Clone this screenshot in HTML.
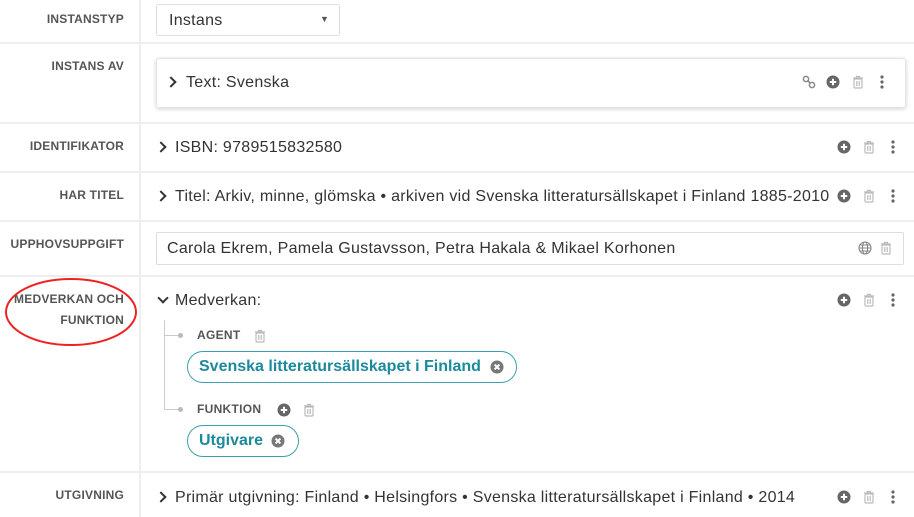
<!DOCTYPE html>
<html><head><meta charset="utf-8"><style>
body{margin:0;width:914px;height:517px;background:#fff;position:relative;overflow:hidden;font-family:"Liberation Sans",sans-serif;color:#333}
.a{position:absolute}
.hl{position:absolute;left:0;width:914px;height:2px;background:#eee}
.vl{position:absolute;left:139px;top:0;width:2px;height:517px;background:#eee}
.lab{position:absolute;right:790px;font-size:12px;font-weight:bold;color:#555;text-align:right;white-space:nowrap;line-height:21px;letter-spacing:0.2px}
.val{position:absolute;font-size:16px;color:#333;white-space:nowrap;letter-spacing:0.28px}
.chev{position:absolute;width:6px;height:6px;border-right:2px solid #333;border-bottom:2px solid #333;transform:rotate(-45deg)}
.pill{position:absolute;border:1.5px solid #3aa0b2;border-radius:17px;color:#1c8a9c;font-weight:bold;font-size:16px;box-sizing:border-box;white-space:nowrap}
</style></head><body>
<svg width="0" height="0" style="position:absolute">
<defs>
<symbol id="plus" viewBox="0 0 14 14"><circle cx="7" cy="7" r="6.5" fill="#666"/><path d="M7 3.8v6.4M3.8 7h6.4" stroke="#fff" stroke-width="2"/></symbol>
<symbol id="trash" viewBox="0 0 12 14"><path d="M1 3h10M4.5 3V1.5h3V3" stroke="#bbb" stroke-width="1.2" fill="none"/><rect x="2" y="4" width="8" height="9" rx="1" fill="none" stroke="#bbb" stroke-width="1.2"/><path d="M4.5 6v5M6 6v5M7.5 6v5" stroke="#bbb" stroke-width="0.8"/></symbol>
<symbol id="keb" viewBox="0 0 4 14"><circle cx="2" cy="2" r="1.6" fill="#666"/><circle cx="2" cy="7" r="1.6" fill="#666"/><circle cx="2" cy="12" r="1.6" fill="#666"/></symbol>
<symbol id="x" viewBox="0 0 14 14"><circle cx="7" cy="7" r="6.5" fill="#777"/><path d="M4.6 4.6l4.8 4.8M9.4 4.6l-4.8 4.8" stroke="#fff" stroke-width="2"/></symbol>
</defs></svg>
<div class="vl"></div>
<div class="hl" style="top:42px"></div>
<div class="hl" style="top:122px"></div>
<div class="hl" style="top:171px"></div>
<div class="hl" style="top:220px"></div>
<div class="hl" style="top:275px"></div>
<div class="hl" style="top:471px"></div>

<div class="lab" style="top:9px">INSTANSTYP</div>
<div class="lab" style="top:56px">INSTANS AV</div>
<div class="lab" style="top:136px">IDENTIFIKATOR</div>
<div class="lab" style="top:185px">HAR TITEL</div>
<div class="lab" style="top:234px">UPPHOVSUPPGIFT</div>
<div class="lab" style="top:289px">MEDVERKAN OCH<br>FUNKTION</div>
<div class="lab" style="top:485px">UTGIVNING</div>

<svg class="a" style="left:0;top:270px" width="150" height="85"><ellipse cx="71" cy="42" rx="65" ry="33" fill="none" stroke="#e22" stroke-width="2"/></svg>

<div class="a" style="left:156px;top:4px;width:184px;height:32px;border:1px solid #ddd;border-radius:3px;box-sizing:border-box"></div>
<div class="val" style="left:169px;top:12px">Instans</div>
<div class="a" style="left:320px;top:14px;font-size:9px;color:#555">▼</div>

<div class="a" style="left:156px;top:58px;width:750px;height:50px;border:1px solid #e4e4e4;border-radius:3px;box-shadow:0 1px 4px rgba(0,0,0,.18);box-sizing:border-box"></div>
<div class="chev" style="left:167px;top:78px"></div>
<div class="val" style="left:186px;top:74px">Text: Svenska</div>
<svg class="a" style="left:802px;top:75px" width="14" height="14" viewBox="0 0 14 14"><circle cx="4" cy="4" r="2.6" fill="none" stroke="#888" stroke-width="1.5"/><circle cx="10" cy="10" r="2.6" fill="none" stroke="#888" stroke-width="1.5"/><path d="M5.5 5.5l3 3" stroke="#888" stroke-width="1.5"/></svg>
<svg class="a" style="left:826px;top:75px" width="14" height="14"><use href="#plus"/></svg>
<svg class="a" style="left:852px;top:75px" width="12" height="14"><use href="#trash"/></svg>
<svg class="a" style="left:880px;top:75px" width="4" height="14"><use href="#keb"/></svg>

<div class="chev" style="left:157px;top:143px"></div>
<div class="val" style="left:175px;top:139px">ISBN: 9789515832580</div>
<svg class="a" style="left:837px;top:140px" width="14" height="14"><use href="#plus"/></svg>
<svg class="a" style="left:863px;top:140px" width="12" height="14"><use href="#trash"/></svg>
<svg class="a" style="left:891px;top:140px" width="4" height="14"><use href="#keb"/></svg>

<div class="chev" style="left:157px;top:192px"></div>
<div class="val" style="left:175px;top:188px">Titel: Arkiv, minne, glömska • arkiven vid Svenska litteratursällskapet i Finland 1885-2010</div>
<svg class="a" style="left:837px;top:189px" width="14" height="14"><use href="#plus"/></svg>
<svg class="a" style="left:863px;top:189px" width="12" height="14"><use href="#trash"/></svg>
<svg class="a" style="left:891px;top:189px" width="4" height="14"><use href="#keb"/></svg>

<div class="a" style="left:156px;top:232px;width:748px;height:33px;border:1px solid #ddd;border-radius:2px;box-sizing:border-box"></div>
<div class="val" style="left:167px;top:240px">Carola Ekrem, Pamela Gustavsson, Petra Hakala &amp; Mikael Korhonen</div>
<svg class="a" style="left:858px;top:241px" width="14" height="14" viewBox="0 0 14 14"><circle cx="7" cy="7" r="6" fill="none" stroke="#888" stroke-width="1.1"/><ellipse cx="7" cy="7" rx="2.6" ry="6" fill="none" stroke="#888" stroke-width="1.1"/><path d="M1 7h12M2 4h10M2 10h10" stroke="#888" stroke-width="1"/></svg>
<svg class="a" style="left:880px;top:241px" width="12" height="14"><use href="#trash"/></svg>

<div class="chev" style="left:159px;top:294px;transform:rotate(45deg)"></div>
<div class="val" style="left:175px;top:292px">Medverkan:</div>
<svg class="a" style="left:837px;top:293px" width="14" height="14"><use href="#plus"/></svg>
<svg class="a" style="left:863px;top:293px" width="12" height="14"><use href="#trash"/></svg>
<svg class="a" style="left:891px;top:293px" width="4" height="14"><use href="#keb"/></svg>

<div class="a" style="left:164px;top:320px;width:1px;height:89px;background:#ccc"></div>
<div class="a" style="left:164px;top:335px;width:16px;height:1px;background:#ccc"></div>
<div class="a" style="left:164px;top:409px;width:16px;height:1px;background:#ccc"></div>
<div class="a" style="left:178px;top:333px;width:5px;height:5px;border-radius:50%;background:#bbb"></div>
<div class="a" style="left:178px;top:407px;width:5px;height:5px;border-radius:50%;background:#bbb"></div>
<div class="a" style="left:197px;top:328px;font-size:12px;font-weight:bold;color:#555;letter-spacing:0.3px">AGENT</div>
<svg class="a" style="left:254px;top:329px" width="12" height="14"><use href="#trash"/></svg>
<div class="pill" style="left:187px;top:351px;width:330px;height:32px;padding:6px 0 0 11px">Svenska litteratursällskapet i Finland</div>
<svg class="a" style="left:490px;top:360px" width="14" height="14"><use href="#x"/></svg>
<div class="a" style="left:197px;top:402px;font-size:12px;font-weight:bold;color:#555;letter-spacing:0.3px">FUNKTION</div>
<svg class="a" style="left:277px;top:403px" width="14" height="14"><use href="#plus"/></svg>
<svg class="a" style="left:303px;top:403px" width="12" height="14"><use href="#trash"/></svg>
<div class="pill" style="left:187px;top:425px;width:112px;height:32px;padding:6px 0 0 11px">Utgivare</div>
<svg class="a" style="left:271px;top:434px" width="14" height="14"><use href="#x"/></svg>

<div class="chev" style="left:157px;top:493px"></div>
<div class="val" style="left:175px;top:489px">Primär utgivning: Finland • Helsingfors • Svenska litteratursällskapet i Finland • 2014</div>
<svg class="a" style="left:837px;top:490px" width="14" height="14"><use href="#plus"/></svg>
<svg class="a" style="left:863px;top:490px" width="12" height="14"><use href="#trash"/></svg>
<svg class="a" style="left:891px;top:490px" width="4" height="14"><use href="#keb"/></svg>
</body></html>
